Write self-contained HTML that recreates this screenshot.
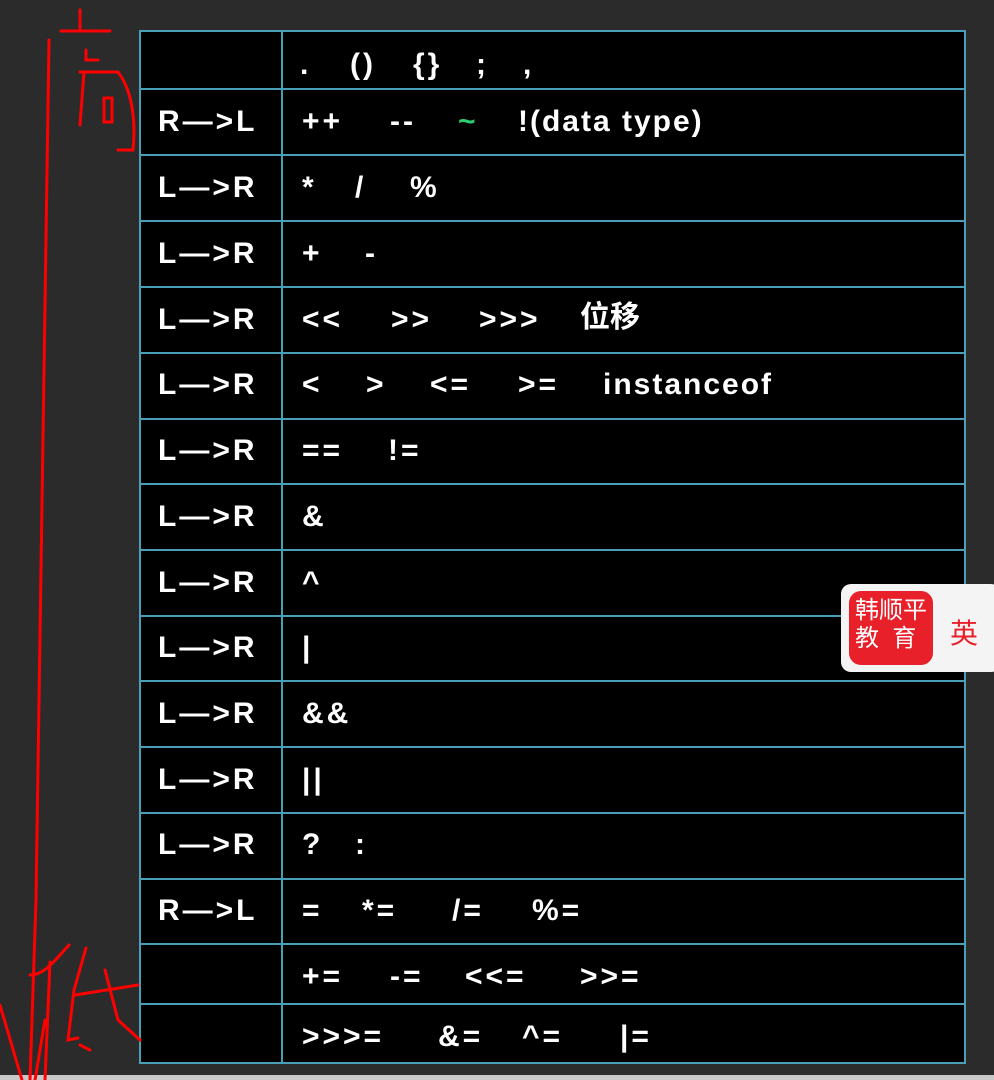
<!DOCTYPE html>
<html><head><meta charset="utf-8"><style>
body{margin:0;width:994px;height:1080px;background:#2b2b2b;overflow:hidden;position:relative;font-family:"Liberation Sans","Noto Sans CJK SC",sans-serif}
.bar{position:absolute;left:0;top:1075px;width:994px;height:5px;background:#c8c8c8}
.t{position:absolute;left:139px;top:30px;width:827px;height:1034px;background:#000;border:2px solid #4a9fb8;box-sizing:border-box}
.r{position:absolute;left:139px;width:827px;border-top:2px solid #4a9fb8;box-sizing:border-box}
.v{position:absolute;left:281px;top:30px;width:2px;height:1034px;background:#4a9fb8}
.c{position:absolute;color:#fff;font-weight:bold;font-size:30px;white-space:pre;line-height:1;letter-spacing:3px}
.l{letter-spacing:3px;left:158px}
.badge{position:absolute;left:841px;top:584px;width:160px;height:88px;background:#f4f4f4;border-radius:10px}
.logo{position:absolute;left:849px;top:591px;width:84px;height:74px;background:#e8202a;border-radius:12px;color:#fff;font-size:24px;line-height:28px;padding:6px 0 0 6px;box-sizing:border-box;white-space:pre}
</style></head><body>
<div class="t"></div>
<div class="r" style="top:88px"></div><div class="r" style="top:154px"></div><div class="r" style="top:220px"></div><div class="r" style="top:286px"></div><div class="r" style="top:352px"></div><div class="r" style="top:418px"></div><div class="r" style="top:483px"></div><div class="r" style="top:549px"></div><div class="r" style="top:615px"></div><div class="r" style="top:680px"></div><div class="r" style="top:746px"></div><div class="r" style="top:812px"></div><div class="r" style="top:878px"></div><div class="r" style="top:943px"></div><div class="r" style="top:1003px"></div>
<div class="v"></div>

<div class="c" style="left:300px;top:50px">.</div><div class="c" style="left:350px;top:50px">()</div><div class="c" style="left:413px;top:50px">{}</div><div class="c" style="left:476px;top:50px">;</div><div class="c" style="left:523px;top:50px">,</div>

<div class="c l" style="top:107px">R—&gt;L</div>
<div class="c" style="left:302px;top:107px">++</div><div class="c" style="left:390px;top:107px">--</div><div class="c" style="left:458px;top:107px;color:#2ecc71">~</div><div class="c" style="left:518px;top:107px;letter-spacing:2px">!(data type)</div>

<div class="c l" style="top:173px">L—&gt;R</div>
<div class="c" style="left:302px;top:173px">*</div><div class="c" style="left:355px;top:173px">/</div><div class="c" style="left:410px;top:173px">%</div>

<div class="c l" style="top:239px">L—&gt;R</div>
<div class="c" style="left:302px;top:239px">+</div><div class="c" style="left:365px;top:239px">-</div>

<div class="c l" style="top:305px">L—&gt;R</div>
<div class="c" style="left:302px;top:305px">&lt;&lt;</div><div class="c" style="left:391px;top:305px">&gt;&gt;</div><div class="c" style="left:479px;top:305px">&gt;&gt;&gt;</div><div class="c" style="left:580px;top:303px;letter-spacing:0;font-size:30px">位移</div>

<div class="c l" style="top:370px">L—&gt;R</div>
<div class="c" style="left:302px;top:370px">&lt;</div><div class="c" style="left:366px;top:370px">&gt;</div><div class="c" style="left:430px;top:370px">&lt;=</div><div class="c" style="left:518px;top:370px">&gt;=</div><div class="c" style="left:603px;top:370px;letter-spacing:2px">instanceof</div>

<div class="c l" style="top:436px">L—&gt;R</div>
<div class="c" style="left:302px;top:436px">==</div><div class="c" style="left:388px;top:436px">!=</div>

<div class="c l" style="top:502px">L—&gt;R</div><div class="c" style="left:302px;top:502px">&amp;</div>
<div class="c l" style="top:568px">L—&gt;R</div><div class="c" style="left:302px;top:568px">^</div>
<div class="c l" style="top:633px">L—&gt;R</div><div class="c" style="left:302px;top:633px">|</div>
<div class="c l" style="top:699px">L—&gt;R</div><div class="c" style="left:302px;top:699px">&amp;&amp;</div>
<div class="c l" style="top:765px">L—&gt;R</div><div class="c" style="left:302px;top:765px">||</div>
<div class="c l" style="top:830px">L—&gt;R</div><div class="c" style="left:302px;top:830px">?</div><div class="c" style="left:355px;top:830px">:</div>

<div class="c l" style="top:896px">R—&gt;L</div>
<div class="c" style="left:302px;top:896px">=</div><div class="c" style="left:362px;top:896px">*=</div><div class="c" style="left:452px;top:896px">/=</div><div class="c" style="left:532px;top:896px">%=</div>

<div class="c" style="left:302px;top:962px">+=</div><div class="c" style="left:390px;top:962px">-=</div><div class="c" style="left:465px;top:962px">&lt;&lt;=</div><div class="c" style="left:580px;top:962px">&gt;&gt;=</div>

<div class="c" style="left:302px;top:1022px">&gt;&gt;&gt;=</div><div class="c" style="left:438px;top:1022px">&amp;=</div><div class="c" style="left:522px;top:1022px">^=</div><div class="c" style="left:620px;top:1022px">|=</div>

<div class="badge"></div>
<div class="logo">韩顺平
教  育</div>
<div style="position:absolute;left:950px;top:612px;color:#e8202a;font-size:28px">英</div>
<div class="bar"></div>
<svg style="position:absolute;left:0;top:0" width="994" height="1080"><g fill="none" stroke="#f00" stroke-width="3" stroke-linecap="round">
<path d="M49 40 C45 300 40 600 36 900 L30 1080"/>
<path d="M80 10 L80 30 M61 31 L110 31 M86 50 L86 60 L98 60 M84 72 L80 125 M80 72 L118 72 C132 90 136 120 133 150 L118 150 M104 98 L104 122 L112 122 L112 98 L104 98"/>
<path d="M69 945 C55 960 45 975 30 975 M50 962 L45 1080 M86 948 L74 990 L68 1040 L78 1038 M75 995 L138 985 M105 970 L118 1020 L140 1040 M80 1045 L90 1050 M0 1005 L22 1080 M45 1020 L35 1080"/>
</g></svg>
</body></html>
